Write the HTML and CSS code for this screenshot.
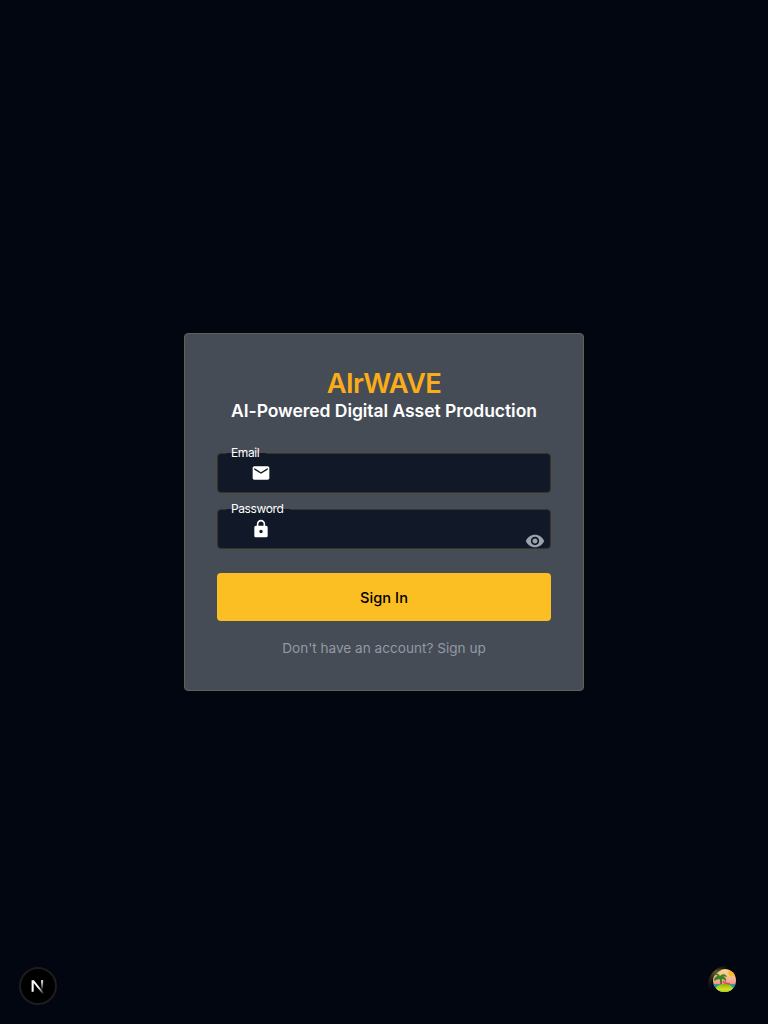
FILE: index.html
```html
<!DOCTYPE html>
<html lang="en">
<head>
<meta charset="utf-8">
<title>AIrWAVE</title>
<link rel="stylesheet" href="styles.css">
</head>
<body>
<main class="page">
  <section class="card">
    <h1 class="brand">AIrWAVE</h1>
    <h2 class="tagline">AI-Powered Digital Asset Production</h2>
    <form class="form">
      <div class="field">
        <label class="label">Email</label>
        <svg class="icon" viewBox="0 0 24 24"><path d="M20 4H4c-1.100 0-2 .9-2 2v12c0 1.100.9 2 2 2h16c1.100 0 2-.9 2-2V6c0-1.100-.9-2-2-2m0 4-8 5-8-5V6l8 5 8-5z"/></svg>
      </div>
      <div class="field">
        <label class="label">Password</label>
        <svg class="icon" viewBox="0 0 24 24"><path d="M18 8h-1V6c0-2.760-2.240-5-5-5S7 3.240 7 6v2H6c-1.100 0-2 .9-2 2v10c0 1.100.9 2 2 2h12c1.100 0 2-.9 2-2V10c0-1.100-.9-2-2-2m-6 9c-1.100 0-2-.9-2-2s.9-2 2-2 2 .9 2 2-.9 2-2 2m3.100-9H8.900V6c0-1.710 1.390-3.100 3.100-3.100s3.100 1.390 3.100 3.100z"/></svg>
        <svg class="eye" viewBox="0 0 24 24"><path d="M12 4.500C7 4.500 2.730 7.610 1 12c1.730 4.390 6 7.500 11 7.500s9.270-3.110 11-7.500c-1.730-4.390-6-7.500-11-7.500M12 17c-2.760 0-5-2.240-5-5s2.240-5 5-5 5 2.240 5 5-2.240 5-5 5m0-8c-1.660 0-3 1.340-3 3s1.340 3 3 3 3-1.340 3-3-1.340-3-3-3"/></svg>
      </div>
      <button class="submit" type="button">Sign In</button>
    </form>
    <a class="signup">Don't have an account? Sign up</a>
  </section>
</main>
<div class="next-badge">
  <svg viewBox="0 0 38 38">
    <defs>
      <linearGradient id="diag" gradientUnits="userSpaceOnUse" x1="20" y1="20" x2="25" y2="27"><stop stop-color="#fff"/><stop offset="1" stop-color="#fff" stop-opacity="0"/></linearGradient>
      <linearGradient id="stem" x1="0" y1="0" x2="0" y2="1"><stop stop-color="#fff"/><stop offset="1" stop-color="#fff" stop-opacity="0"/></linearGradient>
    </defs>
    <circle cx="19" cy="19" r="18" fill="#000" stroke="#1d1d1f" stroke-width="2"/>
    <path d="M12.600 13.200h2.300l10.300 13-1.500 1.100-9-11.400v8.800h-2.100z" fill="url(#diag)"/>
    <path d="M22.100 13.200h2v10h-2z" fill="url(#stem)"/>
  </svg>
</div>
<div class="query-badge">
  <svg viewBox="0 0 32 32">
    <defs>
      <linearGradient id="sky" x1="0" y1="0" x2="0" y2="1"><stop stop-color="#f9dc88"/><stop offset=".5" stop-color="#f7ad90"/><stop offset=".7" stop-color="#ef8981"/></linearGradient>
      <linearGradient id="isle" x1="0" y1="0" x2="0" y2="1"><stop stop-color="#84ad1e"/><stop offset=".45" stop-color="#d3e01f"/><stop offset="1" stop-color="#71a516"/></linearGradient>
      <linearGradient id="halo" gradientUnits="userSpaceOnUse" x1="3" y1="23" x2="24" y2="2"><stop stop-color="#1b1a12" stop-opacity=".4"/><stop offset=".5" stop-color="#6a5b2c"/><stop offset="1" stop-color="#080a0c" stop-opacity="0"/></linearGradient>
      <clipPath id="scene"><circle cx="17.500" cy="16.500" r="11.500"/></clipPath>
    </defs>
    <g clip-path="url(#scene)">
      <path d="M5 4h25v25H5z" fill="url(#sky)"/>
      <circle cx="25" cy="8.500" r="3.800" fill="#fbb72a"/>
      <path d="M5 20h25v8H5z" fill="#15a4a1"/>
      <path d="M13 14q2 4 1 9" fill="none" stroke="#793e25" stroke-width="1.500"/>
      <ellipse cx="17.500" cy="26" rx="9" ry="6.500" fill="url(#isle)"/>
      <path d="M13 12c-2-3-4-3-6-1 2 0 3 0 4 1-3 0-4 3-4 5 2-1 4-2 6-2v3c2-1 2-2 2-3 2 0 3 1 4 3 1-3-1-5-3-5 2-1 3 0 4 0-1-3-4-4-7-1z" fill="#368323"/>
      <path d="m16 17 2 2 5 1" fill="none" stroke="#e34269" stroke-width="1.600"/>
    </g>
    <path d="M3 25C1 14 8 3 25 2" fill="none" stroke="url(#halo)" stroke-width="3.600"/>
  </svg>
</div>
</body>
</html>
```
FILE: styles.css
```css
* { box-sizing: border-box; }
body { margin: 0; background: #020610; font-family: Inter, sans-serif; }
.page { height: 1024px; display: flex; align-items: center; justify-content: center; }
.card {
  width: 400px;
  height: 358px;
  padding: 32px;
  border: 1px solid #646052;
  border-radius: 4px;
  background: #464c56;
  display: flex;
  flex-direction: column;
  align-items: center;
}
.brand { margin: 0; padding-top: 1px; font-size: 27.4px; line-height: 33px; font-weight: 600; letter-spacing: -0.6px; color: #faad18; }
.tagline { margin: 0; font-size: 17.5px; line-height: 22px; font-weight: 600; letter-spacing: -0.05px; color: #fff; white-space: nowrap; }
.form { width: 100%; margin-top: 31px; display: flex; flex-direction: column; gap: 16px; }
.field {
  position: relative;
  z-index: 0;
  height: 40px;
  padding-left: 33px;
  border: 1px solid #3c3429;
  border-radius: 4px;
  background: #111827;
  display: flex;
  align-items: center;
}
.label {
  position: absolute;
  left: 13px;
  top: -10px;
  font-size: 12px;
  line-height: 18px;
  letter-spacing: -0.4px;
  color: #fff;
}
.label::before {
  content: "";
  position: absolute;
  z-index: -1;
  left: -5px;
  right: -7px;
  top: 9px;
  height: 1px;
  background: #111827;
}
.icon { width: 20px; height: 20px; fill: #fff; }
.eye { position: absolute; right: 5px; bottom: -3px; width: 20px; height: 20px; fill: #9ca3af; }
.submit {
  height: 48px;
  margin-top: 8px;
  padding-top: 3px;
  border: 0;
  border-radius: 4px;
  background: #fbbf24;
  color: #000;
  font: 500 14.6px/24px Inter, sans-serif;
  letter-spacing: 0.06px;
}
.signup { margin-top: 16px; font-size: 13.6px; line-height: 22px; color: #9299a5; }
.next-badge { position: fixed; left: 19px; top: 967px; width: 38px; height: 38px; }
.query-badge { position: fixed; left: 707px; top: 964px; width: 32px; height: 32px; }
.next-badge svg, .query-badge svg { display: block; width: 100%; height: 100%; }
```
